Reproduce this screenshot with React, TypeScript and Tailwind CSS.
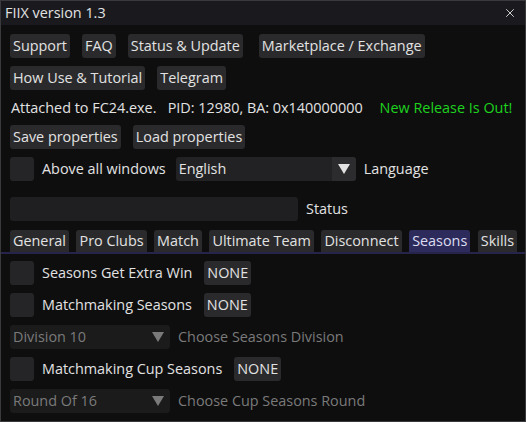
import { X } from "lucide-react";

const font = { fontFamily: '"Open Sans", "Noto Sans", sans-serif' };

const Btn = ({
  label,
  active,
  tab,
}: {
  label: string;
  active?: boolean;
  tab?: boolean;
}) => (
  <div
    className={`flex shrink-0 items-center whitespace-nowrap rounded-[3px] px-[3px] ${
      tab ? "h-[22px] rounded-b-none" : "h-6"
    } ${active ? "bg-[#2d2b5c] text-[#dcdcf0]" : "bg-[#2a2a2c] text-[#e2e2e2]"}`}
  >
    {label}
  </div>
);

const Check = () => <div className="h-6 w-6 shrink-0 rounded-[3px] bg-[#252527]" />;

const Combo = ({
  value,
  width,
  disabled,
}: {
  value: string;
  width: string;
  disabled?: boolean;
}) => (
  <div
    className={`flex h-6 shrink-0 items-center rounded-[3px] ${width} ${
      disabled ? "bg-[#1b1b1c] text-[#7a7a7a]" : "bg-[#222224] text-[#e2e2e2]"
    }`}
  >
    <span className="flex-1 px-[3px]">{value}</span>
    <div
      className={`flex h-6 w-6 items-center justify-center rounded-r-[3px] ${
        disabled ? "" : "bg-[#2c2c2e]"
      }`}
    >
      <svg width="14" height="12" viewBox="0 0 14 12">
        <path d="M1 1 L13 1 L7 11 Z" fill={disabled ? "#7a7a7a" : "#e2e2e2"} />
      </svg>
    </div>
  </div>
);

export default function App() {
  return (
    <div
      className="h-[422px] w-[526px] overflow-hidden whitespace-nowrap border border-[#3a3a3c] bg-[#0e0e0f] text-[14.4px] text-[#e2e2e2]"
      style={font}
    >
      {/* title bar */}
      <div className="flex h-6 items-center justify-between bg-[#1a1a1e] pl-[4px] pr-[8px]">
        <span>FIIX version 1.3</span>
        <X size={14} strokeWidth={1.6} className="text-[#dcdcdc]" />
      </div>

      <div className="flex flex-col px-[9px] pt-[9px]">
        <div className="flex gap-3">
          <Btn label="Support" />
          <Btn label="FAQ" />
          <Btn label="Status & Update" />
          <div className="ml-1">
            <Btn label="Marketplace / Exchange" />
          </div>
        </div>

        <div className="mt-2 flex gap-3">
          <Btn label="How Use & Tutorial" />
          <Btn label="Telegram" />
        </div>

        <div className="mt-2 flex h-[19px] items-center px-[1px]">
          <span className="whitespace-pre">Attached to FC24.exe.   PID: 12980, BA: 0x140000000</span>
          <span className="ml-[17px] text-[#1ed21e]">New Release Is Out!</span>
        </div>

        <div className="mt-2 flex gap-3">
          <Btn label="Save properties" />
          <Btn label="Load properties" />
        </div>

        <div className="mt-2 flex items-center">
          <Check />
          <span className="ml-2">Above all windows</span>
          <div className="ml-[10px]">
            <Combo value="English" width="w-[180px]" />
          </div>
          <span className="ml-2">Language</span>
        </div>

        <div className="mt-4 flex items-center">
          <div className="h-6 w-[288px] rounded-[3px] bg-[#1f1f21]" />
          <span className="ml-2">Status</span>
        </div>

        {/* tabs */}
        <div className="mt-[9px] flex flex-col">
          <div className="flex gap-[7.5px]">
            <Btn tab label="General" />
            <Btn tab label="Pro Clubs" />
            <Btn tab label="Match" />
            <Btn tab label="Ultimate Team" />
            <Btn tab label="Disconnect" />
            <Btn tab label="Seasons" active />
            <Btn tab label="Skills" />
          </div>
          <div className="-mx-[9px] h-[2px] bg-[#26244a]" />
        </div>

        <div className="mt-[7px] flex items-center">
          <Check />
          <span className="ml-2">Seasons Get Extra Win</span>
          <div className="ml-3">
            <Btn label="NONE" />
          </div>
        </div>

        <div className="mt-2 flex items-center">
          <Check />
          <span className="ml-2">Matchmaking Seasons</span>
          <div className="ml-3">
            <Btn label="NONE" />
          </div>
        </div>

        <div className="mt-2 flex items-center text-[#7a7a7a]">
          <Combo value="Division 10" width="w-[160px]" disabled />
          <span className="ml-2">Choose Seasons Division</span>
        </div>

        <div className="mt-2 flex items-center">
          <Check />
          <span className="ml-2">Matchmaking Cup Seasons</span>
          <div className="ml-3">
            <Btn label="NONE" />
          </div>
        </div>

        <div className="mt-2 flex items-center text-[#7a7a7a]">
          <Combo value="Round Of 16" width="w-[160px]" disabled />
          <span className="ml-2">Choose Cup Seasons Round</span>
        </div>
      </div>
    </div>
  );
}
